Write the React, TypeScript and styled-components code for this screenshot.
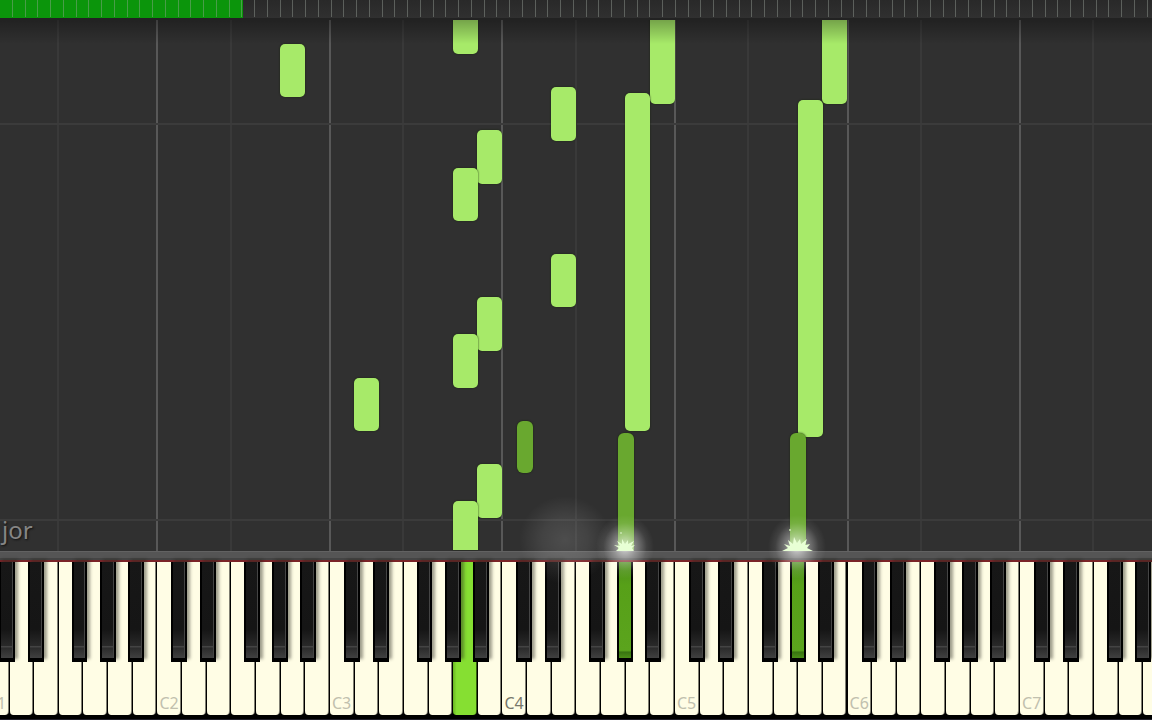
import React from "react";
import styled, { createGlobalStyle, css } from "styled-components";

const GlobalStyle = createGlobalStyle`
  *, *::before, *::after { box-sizing: border-box; }
  body { margin: 0; background: #000; font-family: "Noto Sans", "Open Sans", sans-serif; overflow: hidden; }
`;

/* The visible stage is 1152 design units wide; everything scales with it. */
const pct = (units: number) => `${(units / 1152) * 100}%`;

const Page = styled.main`
  display: flex;
  flex-direction: column;
  height: 100vh;
  overflow: hidden;
`;

const Timeline = styled.div`
  position: relative;
  flex: none;
  height: 18px;
  overflow: hidden;
`;

const Progress = styled.progress`
  appearance: none;
  display: block;
  width: 100%;
  height: 18px;
  border: 0;
  &::-webkit-progress-bar { background: linear-gradient(#292929, #303030); }
  &::-webkit-progress-value { background: #0b950b; }
`;

const Ticks = styled.div`
  position: absolute;
  inset: 0;
  display: flex;
`;

const Tick = styled.i`
  flex: none;
  width: 1.107%;
  height: 17px;
  border-right: 1px solid rgba(160, 170, 160, 0.42);
`;

const Roll = styled.section`
  position: relative;
  flex: 1;
  min-height: 0;
  overflow: hidden;
  background: #303030;
`;

const octaveStrip = css`
  display: flex;
  width: 104.84%;
  margin-left: -1.4%;
`;

const Guides = styled.div`
  ${octaveStrip}
  height: 100%;
`;

const GuideOctave = styled.div`
  flex: 1;
  display: flex;
  border-left: 2px solid #585858;
`;

const LowGuide = styled.div`
  width: 43%;
  border-right: 2px solid #393939;
`;

const BarLine = styled.div<{ $top: number }>`
  position: absolute;
  left: 0;
  right: 0;
  top: ${(p) => p.$top}px;
  height: 2px;
  background: #3b3b3b;
`;

const Note = styled.div<{ $x: number; $top: number; $h?: number; $dark?: boolean }>`
  position: absolute;
  left: ${(p) => pct(p.$x)};
  width: ${(p) => pct(p.$dark ? 16 : 25)};
  top: ${(p) => p.$top}px;
  ${(p) => (p.$h ? `height: ${p.$h}px;` : "bottom: 1px;")}
  background: ${(p) => (p.$dark ? "#69a82f" : "#a7ea69")};
  border-radius: ${(p) => (p.$dark ? 6 : 5)}px;
  ${(p) => !p.$h && "border-bottom-left-radius: 0; border-bottom-right-radius: 0;"}
  box-shadow: 0 0 2px #17250c;
`;

const TopShade = styled.div`
  position: absolute;
  inset: 0 0 auto;
  height: 26px;
  border-top: 2px solid #222;
  background: linear-gradient(rgba(0, 0, 0, 0.3), transparent);
`;

const KeySignature = styled.p`
  position: absolute;
  left: 2px;
  bottom: 4px;
  margin: 0;
  font-size: 24px;
  line-height: 34px;
  color: #858585;
  text-shadow: 1px 1px 2px #111;
`;

const Rail = styled.div`
  flex: none;
  height: 9px;
  background: #555;
  border-top: 1px solid #626262;
  border-bottom: 2px solid #444;
`;

const Keyboard = styled.section`
  flex: none;
  height: 160px;
  border-top: 2px solid #7b2428;
  border-bottom: 1px solid #22202a;
  background: #000;
`;

const Octaves = styled.div`
  ${octaveStrip}
  height: 153px;
`;

const Octave = styled.div`
  position: relative;
  flex: 1;
  display: flex;
`;

const WhiteKey = styled.button<{ $pressed: boolean; $middle: boolean }>`
  flex: 1;
  min-width: 0;
  display: flex;
  align-items: flex-end;
  padding: 0 0 0 2px;
  border: 0;
  border-left: 1px solid #000;
  border-right: 1px solid rgba(0, 0, 0, 0.5);
  border-radius: 0 0 4px 4px;
  background: ${(p) =>
    p.$pressed ? "linear-gradient(90deg, #68b522, #86df32 16%)" : "#fffde5"};
  color: ${(p) => (p.$middle ? "#77776b" : "#c1c0ae")};
  font: 16px/24px "Noto Sans", "Open Sans", sans-serif;
`;

const BlackKey = styled.button<{ $x: number; $pressed: boolean }>`
  position: absolute;
  top: 0;
  left: ${(p) => p.$x}%;
  width: 9.2%;
  height: 100px;
  padding: 0;
  border: solid #000;
  border-width: 0 2px 4px;
  background: ${(p) =>
    p.$pressed
      ? "linear-gradient(#4b8b1c, #57a018 24%, #5ba41d 92%, #397411 94%, #4b8e17)"
      : "linear-gradient(#171717, #151515 70%, #292929 87%, #444 88%, #2c2c2c 90%, #404040)"};
  box-shadow: ${(p) =>
    p.$pressed ? "none" : "inset -1px 0 #454545, 3px -3px 3px rgba(40, 40, 30, 0.45)"};
`;

const Effects = styled.svg`
  position: absolute;
  left: ${pct(500)};
  bottom: 134px;
  width: ${pct(360)};
  height: 90px;
  pointer-events: none;
`;

const whites = ["C", "D", "E", "F", "G", "A", "B"];
const blacks = [
  { name: "C♯", x: 8.7 },
  { name: "D♯", x: 25.4 },
  { name: "F♯", x: 50.8 },
  { name: "G♯", x: 67.1 },
  { name: "A♯", x: 83.4 },
];
const octaves = [1, 2, 3, 4, 5, 6, 7];
const pressed = ["A3", "G♯4", "G♯5"];

/* Tops are measured from the upper edge of the roll. */
const notes = [
  { x: 280, top: 26, h: 53 },
  { x: 453, top: -20, h: 56 },
  { x: 551, top: 69, h: 54 },
  { x: 477, top: 112, h: 54 },
  { x: 453, top: 150, h: 53 },
  { x: 551, top: 236, h: 53 },
  { x: 477, top: 279, h: 54 },
  { x: 453, top: 316, h: 54 },
  { x: 354, top: 360, h: 53 },
  { x: 477, top: 446, h: 54 },
  { x: 453, top: 483 },
  { x: 650, top: -20, h: 106 },
  { x: 625, top: 75, h: 338 },
  { x: 822, top: -20, h: 106 },
  { x: 798, top: 82, h: 337 },
  { x: 517, top: 403, h: 52, dark: true },
  { x: 618, top: 415, dark: true },
  { x: 790, top: 415, dark: true },
];

const Spark = ({ x, wide }: { x: number; wide?: boolean }) => (
  <g transform={`translate(${x} 0)`}>
    <ellipse cx="0" cy="51" rx="29" ry="32" fill="url(#glow)" />
    <path
      d={
        wide
          ? "M-15 55-9 52-13 48-7 50-9 44-4 48-3 41 0 47 3 43 4 48 10 43 8 49 13 48 10 52 16 55Z"
          : "M-9 55-6 52-11 49-5 50-8 45-3 48-3 43 0 48 3 44 3 48 9 45 6 50 10 49 7 52 9 55Z"
      }
      fill="#e8ffd5"
    />
    <circle cx={wide ? -7 : -4} cy={wide ? 34 : 37} r="1" fill="#c8e5b1" />
  </g>
);

export default function App() {
  return (
    <Page>
      <GlobalStyle />
      <Timeline>
        <Progress value={242.5} max={1152} aria-label="Song position" />
        <Ticks>
          {Array.from({ length: 90 }, (_, i) => (
            <Tick key={i} />
          ))}
        </Ticks>
      </Timeline>
      <Roll aria-label="Falling notes">
        <Guides>
          {octaves.map((o) => (
            <GuideOctave key={o}>
              <LowGuide />
            </GuideOctave>
          ))}
        </Guides>
        <BarLine $top={105} />
        <BarLine $top={501} />
        {notes.map((n, i) => (
          <Note key={i} $x={n.x} $top={n.top} $h={n.h} $dark={n.dark} />
        ))}
        <TopShade />
        <KeySignature>jor</KeySignature>
      </Roll>
      <Rail />
      <Keyboard aria-label="Piano keyboard">
        <Octaves>
          {octaves.map((o) => (
            <Octave key={o}>
              {whites.map((w) => (
                <WhiteKey
                  key={w}
                  type="button"
                  aria-label={w + o}
                  $pressed={pressed.includes(w + o)}
                  $middle={o === 4}
                >
                  {w === "C" && w + o}
                </WhiteKey>
              ))}
              {blacks.map((b) => (
                <BlackKey
                  key={b.name}
                  type="button"
                  aria-label={b.name + o}
                  $x={b.x}
                  $pressed={pressed.includes(b.name + o)}
                />
              ))}
            </Octave>
          ))}
        </Octaves>
      </Keyboard>
      <Effects viewBox="0 0 360 90" preserveAspectRatio="none" aria-hidden="true">
        <defs>
          <radialGradient id="glow">
            <stop offset="0" stopColor="#fff" stopOpacity="0.75" />
            <stop offset="0.4" stopColor="#fff" stopOpacity="0.36" />
            <stop offset="0.75" stopColor="#fff" stopOpacity="0.08" />
            <stop offset="1" stopColor="#fff" stopOpacity="0" />
          </radialGradient>
          <radialGradient id="haze">
            <stop offset="0" stopColor="#fff" stopOpacity="0.14" />
            <stop offset="0.5" stopColor="#fff" stopOpacity="0.09" />
            <stop offset="1" stopColor="#fff" stopOpacity="0" />
          </radialGradient>
        </defs>
        <ellipse cx="65" cy="44" rx="46" ry="44" fill="url(#haze)" />
        <Spark x={125} />
        <Spark x={297} wide />
      </Effects>
    </Page>
  );
}
